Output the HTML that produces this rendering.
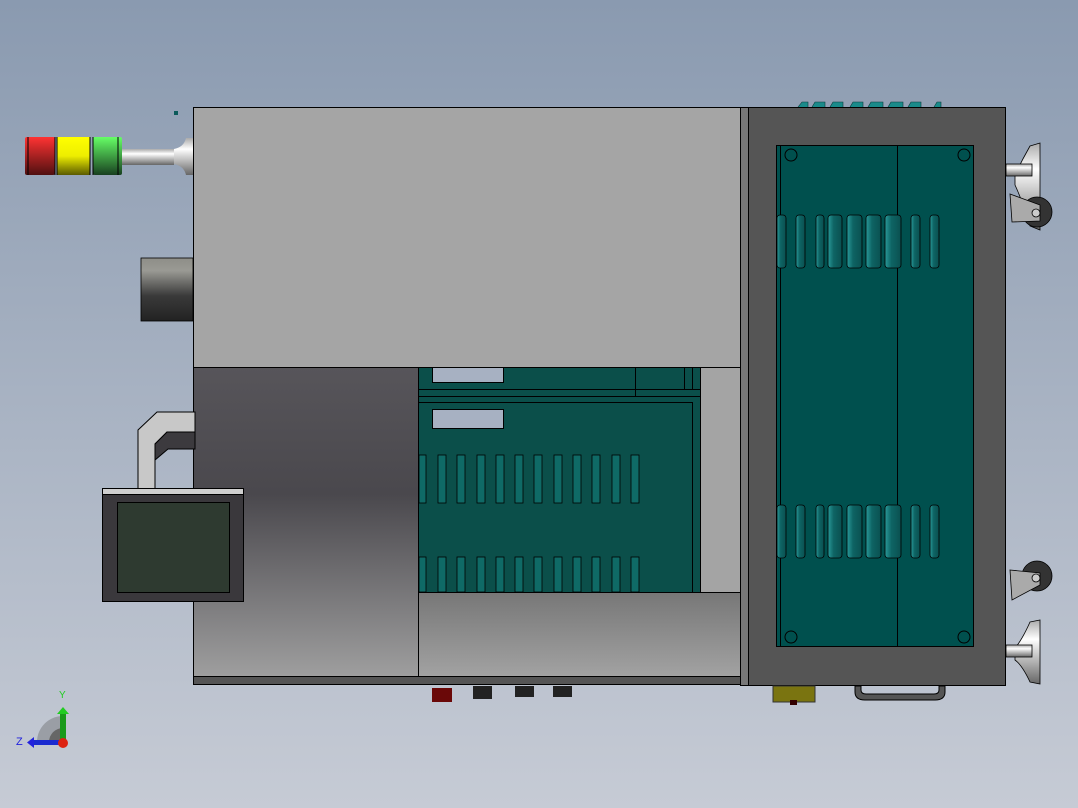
<!DOCTYPE html>
<html><head><style>html,body{margin:0;padding:0;width:1078px;height:808px;overflow:hidden}</style></head><body>
<svg width="1078" height="808" viewBox="0 0 1078 808" xmlns="http://www.w3.org/2000/svg">
<defs>
<linearGradient id="bg" x1="0" y1="0" x2="0" y2="1"><stop offset="0" stop-color="#8a9ab0"/><stop offset="1" stop-color="#c6cbd5"/></linearGradient>
<linearGradient id="lp" x1="0" y1="0" x2="0" y2="1"><stop offset="0" stop-color="#57555a"/><stop offset="0.4" stop-color="#4a484d"/><stop offset="1" stop-color="#a2a2a2"/></linearGradient>
<linearGradient id="bp" x1="0" y1="0" x2="0" y2="1"><stop offset="0" stop-color="#777"/><stop offset="1" stop-color="#a2a2a2"/></linearGradient>
<linearGradient id="cyl" x1="0" y1="0" x2="0" y2="1"><stop offset="0" stop-color="#8e8e88"/><stop offset="0.2" stop-color="#9a9a94"/><stop offset="0.6" stop-color="#3a3a3a"/><stop offset="1" stop-color="#222"/></linearGradient>
<linearGradient id="rd" x1="0" y1="0" x2="0" y2="1"><stop offset="0" stop-color="#f33"/><stop offset="1" stop-color="#501010"/></linearGradient>
<linearGradient id="yl" x1="0" y1="0" x2="0" y2="1"><stop offset="0" stop-color="#ff0"/><stop offset="0.5" stop-color="#ee0"/><stop offset="1" stop-color="#5a5a00"/></linearGradient>
<linearGradient id="gr" x1="0" y1="0" x2="0" y2="1"><stop offset="0" stop-color="#6f6"/><stop offset="1" stop-color="#184020"/></linearGradient>
<linearGradient id="sh" x1="0" y1="0" x2="0" y2="1"><stop offset="0" stop-color="#aaa"/><stop offset="0.3" stop-color="#fff"/><stop offset="1" stop-color="#666"/></linearGradient>
<linearGradient id="sl" x1="0" y1="0" x2="1" y2="0"><stop offset="0" stop-color="#2a9a9a"/><stop offset="0.4" stop-color="#0e6464"/><stop offset="1" stop-color="#0a5050"/></linearGradient>
</defs>
<rect width="1078" height="808" fill="url(#bg)"/>
<rect x="122" y="149" width="52" height="16" fill="url(#sh)"/>
<path d="M174 149 Q184 147 186 138 L193 138 L193 175 L186 175 Q184 166 174 164 Z" fill="url(#sh)"/>
<rect x="25" y="137" width="30" height="38" rx="2" fill="url(#rd)"/>
<rect x="57" y="137" width="33" height="38" fill="url(#yl)"/>
<rect x="93" y="137" width="29" height="38" rx="2" fill="url(#gr)"/>
<g stroke="#000" stroke-width="1"><line x1="28" y1="137" x2="28" y2="175"/><line x1="55" y1="137" x2="55" y2="175"/><line x1="57" y1="137" x2="57" y2="175"/><line x1="90" y1="137" x2="90" y2="175"/><line x1="93" y1="137" x2="93" y2="175"/><line x1="118" y1="137" x2="118" y2="175"/></g>
<rect x="174" y="111" width="4" height="4" fill="#0b5a5a"/>
<rect x="141" y="258" width="52" height="63" fill="url(#cyl)" stroke="#000" stroke-width="0.8"/>
<rect x="193.5" y="107.5" width="547" height="260" fill="#a5a5a5" stroke="#000"/>
<rect x="193.5" y="367.5" width="225" height="317" fill="url(#lp)" stroke="#000"/>
<rect x="418.5" y="367.5" width="282" height="225" fill="#0b4f4a" stroke="#000"/>
<g fill="none" stroke="#000"><line x1="418" y1="389.5" x2="700" y2="389.5"/><line x1="418" y1="396.5" x2="700" y2="396.5"/><rect x="418.5" y="402.5" width="274" height="190"/><line x1="635.5" y1="367" x2="635.5" y2="396"/><line x1="684.5" y1="367" x2="684.5" y2="390"/><line x1="692.5" y1="367" x2="692.5" y2="390"/></g>
<rect x="432.5" y="367.5" width="71" height="15" fill="#a7b1c2" stroke="#000"/>
<rect x="432.5" y="409.5" width="71" height="19" fill="#a7b1c2" stroke="#000"/>
<g stroke="#000" stroke-width="0.8" fill="#0f6a66">
<rect x="419" y="455" width="7" height="48"/><rect x="438" y="455" width="8" height="48"/><rect x="457" y="455" width="8" height="48"/><rect x="477" y="455" width="8" height="48"/><rect x="496" y="455" width="8" height="48"/><rect x="515" y="455" width="8" height="48"/><rect x="534" y="455" width="8" height="48"/><rect x="554" y="455" width="8" height="48"/><rect x="573" y="455" width="8" height="48"/><rect x="592" y="455" width="8" height="48"/><rect x="612" y="455" width="8" height="48"/><rect x="631" y="455" width="8" height="48"/>
<rect x="419" y="557" width="7" height="35"/><rect x="438" y="557" width="8" height="35"/><rect x="457" y="557" width="8" height="35"/><rect x="477" y="557" width="8" height="35"/><rect x="496" y="557" width="8" height="35"/><rect x="515" y="557" width="8" height="35"/><rect x="534" y="557" width="8" height="35"/><rect x="554" y="557" width="8" height="35"/><rect x="573" y="557" width="8" height="35"/><rect x="592" y="557" width="8" height="35"/><rect x="612" y="557" width="8" height="35"/><rect x="631" y="557" width="8" height="35"/>
</g>
<rect x="700.5" y="367.5" width="40" height="225" fill="#a4a4a4" stroke="#000"/>
<rect x="418.5" y="592.5" width="322" height="84" fill="url(#bp)" stroke="#000"/>
<rect x="193.5" y="676.5" width="547" height="8" fill="#555" stroke="#000"/>
<rect x="432" y="688" width="20" height="14" fill="#6a0808"/>
<rect x="473" y="686" width="19" height="13" fill="#222"/>
<rect x="515" y="686" width="19" height="11" fill="#222"/>
<rect x="553" y="686" width="19" height="11" fill="#222"/>
<path d="M138 430 L157 412 L195 412 L195 432 L167 432 L155 444 L155 489 L138 489 Z" fill="#c8c8c8" stroke="#000"/>
<path d="M155 444 L167 432 L195 432 L195 449 L168 449 L155 460 Z" fill="#3c3a3e" stroke="#000"/>
<rect x="102.5" y="488.5" width="141" height="6" fill="#cfcfcf" stroke="#000"/>
<rect x="102.5" y="494.5" width="141" height="107" fill="#3a383c" stroke="#000"/>
<rect x="117.5" y="502.5" width="112" height="90" fill="#2e3a30" stroke="#000"/>
<rect x="740.5" y="107.5" width="8" height="578" fill="#777" stroke="#000"/>
<path d="M798 107 l4-5 h6 v5 M812 107 l3-5 h10 v5 M830 107 l3-5 h10 v5 M850 107 l3-5 h10 v5 M868 107 l3-5 h12 v5 M888 107 l3-5 h12 v5 M908 107 l3-5 h10 v5 M934 107 l3-5 h4 v5" fill="#1a8a8a" stroke="#0a3a3a" stroke-width="0.6"/>
<rect x="748.5" y="107.5" width="257" height="578" fill="#555" stroke="#000"/>
<rect x="776.5" y="145.5" width="4" height="501" fill="#00504e" stroke="#000"/>
<rect x="780.5" y="145.5" width="193" height="501" fill="#00504e" stroke="#000"/>
<line x1="897.5" y1="146" x2="897.5" y2="646" stroke="#000"/>
<g fill="none" stroke="#000"><circle cx="791" cy="155" r="6"/><circle cx="964" cy="155" r="6"/><circle cx="791" cy="637" r="6"/><circle cx="964" cy="637" r="6"/></g>
<g stroke="#000" stroke-width="0.8" fill="url(#sl)">
<rect x="777" y="215" width="9" height="53" rx="3"/><rect x="796" y="215" width="9" height="53" rx="3"/><rect x="816" y="215" width="8" height="53" rx="3"/><rect x="828" y="215" width="14" height="53" rx="3"/><rect x="847" y="215" width="15" height="53" rx="3"/><rect x="866" y="215" width="15" height="53" rx="3"/><rect x="885" y="215" width="16" height="53" rx="3"/><rect x="911" y="215" width="9" height="53" rx="3"/><rect x="930" y="215" width="9" height="53" rx="3"/>
<rect x="777" y="505" width="9" height="53" rx="3"/><rect x="796" y="505" width="9" height="53" rx="3"/><rect x="816" y="505" width="8" height="53" rx="3"/><rect x="828" y="505" width="14" height="53" rx="3"/><rect x="847" y="505" width="15" height="53" rx="3"/><rect x="866" y="505" width="15" height="53" rx="3"/><rect x="885" y="505" width="16" height="53" rx="3"/><rect x="911" y="505" width="9" height="53" rx="3"/><rect x="930" y="505" width="9" height="53" rx="3"/>
</g>
<rect x="773" y="686" width="42" height="16" fill="#7a7410" stroke="#333"/>
<rect x="790" y="700" width="7" height="5" fill="#300"/>
<path d="M855 686 v6 q0 8 10 8 h70 q10 0 10-8 v-6 h-6 v4 q0 4-5 4 h-68 q-5 0-5-4 v-4 Z" fill="#555" stroke="#000"/>
<g stroke="#000" stroke-width="0.8">
<path d="M1030 146 L1040 143 L1040 230 L1030 226 Q1022 200 1015 185 L1015 175 Q1022 160 1030 146 Z" fill="url(#sh)"/>
<rect x="1006" y="164" width="26" height="12" fill="url(#sh)"/>
<circle cx="1037" cy="212" r="15" fill="#333"/>
<path d="M1010 194 L1040 205 L1040 221 L1012 222 Z" fill="#aaa"/>
<circle cx="1036" cy="213" r="4" fill="#ccc"/>
<circle cx="1037" cy="576" r="15" fill="#333"/>
<path d="M1010 570 L1040 573 L1040 585 L1012 600 Z" fill="#aaa"/>
<circle cx="1036" cy="578" r="4" fill="#ccc"/>
<path d="M1030 622 L1040 620 L1040 684 L1030 682 Q1022 665 1015 660 L1015 648 Q1022 640 1030 622 Z" fill="url(#sh)"/>
<rect x="1006" y="645" width="26" height="12" fill="url(#sh)"/>
</g>
<path d="M37 742 A26 26 0 0 1 63 716 L63 742 Z" fill="#9a9ea5"/>
<path d="M49 742 A14 14 0 0 1 63 728 L63 742 Z" fill="#666"/>
<rect x="60" y="713" width="6" height="29" fill="#1a9a1a"/><path d="M57 714 L63 707 L69 714 Z" fill="#2c2"/>
<rect x="33" y="740" width="30" height="5" fill="#1a2ad0"/><path d="M34 737 L27 742.5 L34 748 Z" fill="#22d"/>
<circle cx="63" cy="743" r="5" fill="#d21"/>
<text x="59" y="698" font-family="Liberation Sans, sans-serif" font-size="10" fill="#2c2">Y</text>
<text x="16" y="745" font-family="Liberation Sans, sans-serif" font-size="11" fill="#22d">Z</text>
</svg>
</body></html>
